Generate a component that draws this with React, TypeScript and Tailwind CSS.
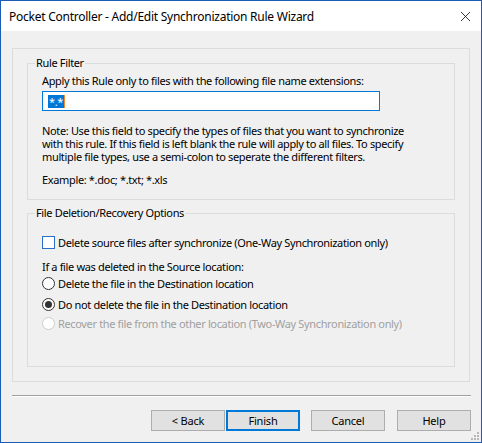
import { X } from 'lucide-react'

const font = 'font-["Noto_Sans","Liberation_Sans",sans-serif]'

const Radio = ({ checked, disabled, label }: { checked?: boolean; disabled?: boolean; label: string }) => (
  <div className="flex items-center h-[13px]">
    <span
      className={`w-[13px] h-[13px] shrink-0 rounded-full border bg-white flex items-center justify-center ${
        disabled ? 'border-[#cccccc]' : 'border-[#333333]'
      }`}
    >
      {checked && <span className="w-[7px] h-[7px] rounded-full bg-[#333333]" />}
    </span>
    <span className={`ml-[3px] whitespace-nowrap ${disabled ? 'text-[#a0a0a0]' : 'text-black'}`}>{label}</span>
  </div>
)

const WizardButton = ({ label, primary }: { label: string; primary?: boolean }) => (
  <button
    className={`w-[74px] h-[21px] bg-[#e1e1e1] text-black text-[11px] tracking-[-0.2px] leading-none ${
      primary ? 'border-2 border-[#0078d7]' : 'border border-[#adadad]'
    }`}
  >
    {label}
  </button>
)

export default function App() {
  return (
    <div
      className={`w-[482px] h-[443px] border border-[#1c5bb6] bg-[#f0f0f0] flex flex-col text-[11px] tracking-[-0.35px] leading-[13px] text-black ${font}`}
    >
      <div className="h-[30px] bg-white flex items-center justify-between pl-[8px] pr-[7px] shrink-0">
        <span className="text-[12px] tracking-[-0.25px] text-black">
          Pocket Controller - Add/Edit Synchronization Rule Wizard
        </span>
        <X className="w-[17px] h-[17px] text-black" strokeWidth={1.1} />
      </div>

      <div className="pt-[17px] px-[11px] flex flex-col">
        <div className="border border-[#dcdcdc] h-[334px] pl-[14px] pt-[7px]">
          <fieldset className="border border-[#dcdcdc] w-[428px] h-[144px] pl-[14px]">
            <legend className="px-[1px] ml-[-7px] leading-[14px]">Rule Filter</legend>
            <div className="mt-[4px] whitespace-nowrap">
              Apply this Rule only to files with the following file name extensions:
            </div>
            <div className="mt-[4px] w-[338px] h-[20px] border border-[#0078d7] bg-white flex items-center pl-[5px]">
              <span className="bg-[#0078d7] text-white h-[13px] w-[16px] leading-[13px] text-center">*.*</span>
              <span className="w-[1px] h-[13px] bg-[#f28c28]" />
            </div>
            <div className="mt-[13px] whitespace-nowrap">
              <div>Note: Use this field to specify the types of files that you want to synchronize</div>
              <div>with this rule. If this field is left blank the rule will apply to all files. To specify</div>
              <div>multiple file types, use a semi-colon to seperate the different filters.</div>
            </div>
            <div className="mt-[10px]">Example: *.doc; *.txt; *.xls</div>
          </fieldset>

          <fieldset className="border border-[#dcdcdc] w-[428px] h-[161px] pl-[14px] mt-[6px]">
            <legend className="px-[1px] ml-[-7px] leading-[14px]">File Deletion/Recovery Options</legend>
            <div className="mt-[16px] flex items-center h-[13px]">
              <span className="w-[13px] h-[13px] shrink-0 border border-[#2a6fc9] bg-white" />
              <span className="ml-[3px] whitespace-nowrap">
                Delete source files after synchronize (One-Way Synchronization only)
              </span>
            </div>
            <div className="mt-[11px]">If a file was deleted in the Source location:</div>
            <div className="mt-[4px]">
              <Radio label="Delete the file in the Destination location" />
            </div>
            <div className="mt-[8px]">
              <Radio checked label="Do not delete the file in the Destination location" />
            </div>
            <div className="mt-[6px]">
              <Radio disabled label="Recover the file from the other location (Two-Way Synchronization only)" />
            </div>
          </fieldset>
        </div>

        <div className="mt-[13px] w-[459px] border-t border-[#a0a0a0] border-b border-b-white" />

        <div className="mt-[13px] flex justify-end w-[459px]">
          <div className="flex">
            <WizardButton label="< Back" />
            <div className="ml-[1px]">
              <WizardButton label="Finish" primary />
            </div>
            <div className="ml-[11px]">
              <WizardButton label="Cancel" />
            </div>
            <div className="ml-[12px]">
              <WizardButton label="Help" />
            </div>
          </div>
        </div>
      </div>

      <div className="flex-1 flex justify-end items-end pr-[2px] pb-[2px]">
        <div className="grid grid-cols-3 gap-[1px] w-[8px] h-[8px]">
          <span />
          <span />
          <span className="w-[2px] h-[2px] bg-[#b8b8b8]" />
          <span />
          <span className="w-[2px] h-[2px] bg-[#b8b8b8]" />
          <span className="w-[2px] h-[2px] bg-[#b8b8b8]" />
          <span className="w-[2px] h-[2px] bg-[#b8b8b8]" />
          <span className="w-[2px] h-[2px] bg-[#b8b8b8]" />
          <span className="w-[2px] h-[2px] bg-[#b8b8b8]" />
        </div>
      </div>
    </div>
  )
}
